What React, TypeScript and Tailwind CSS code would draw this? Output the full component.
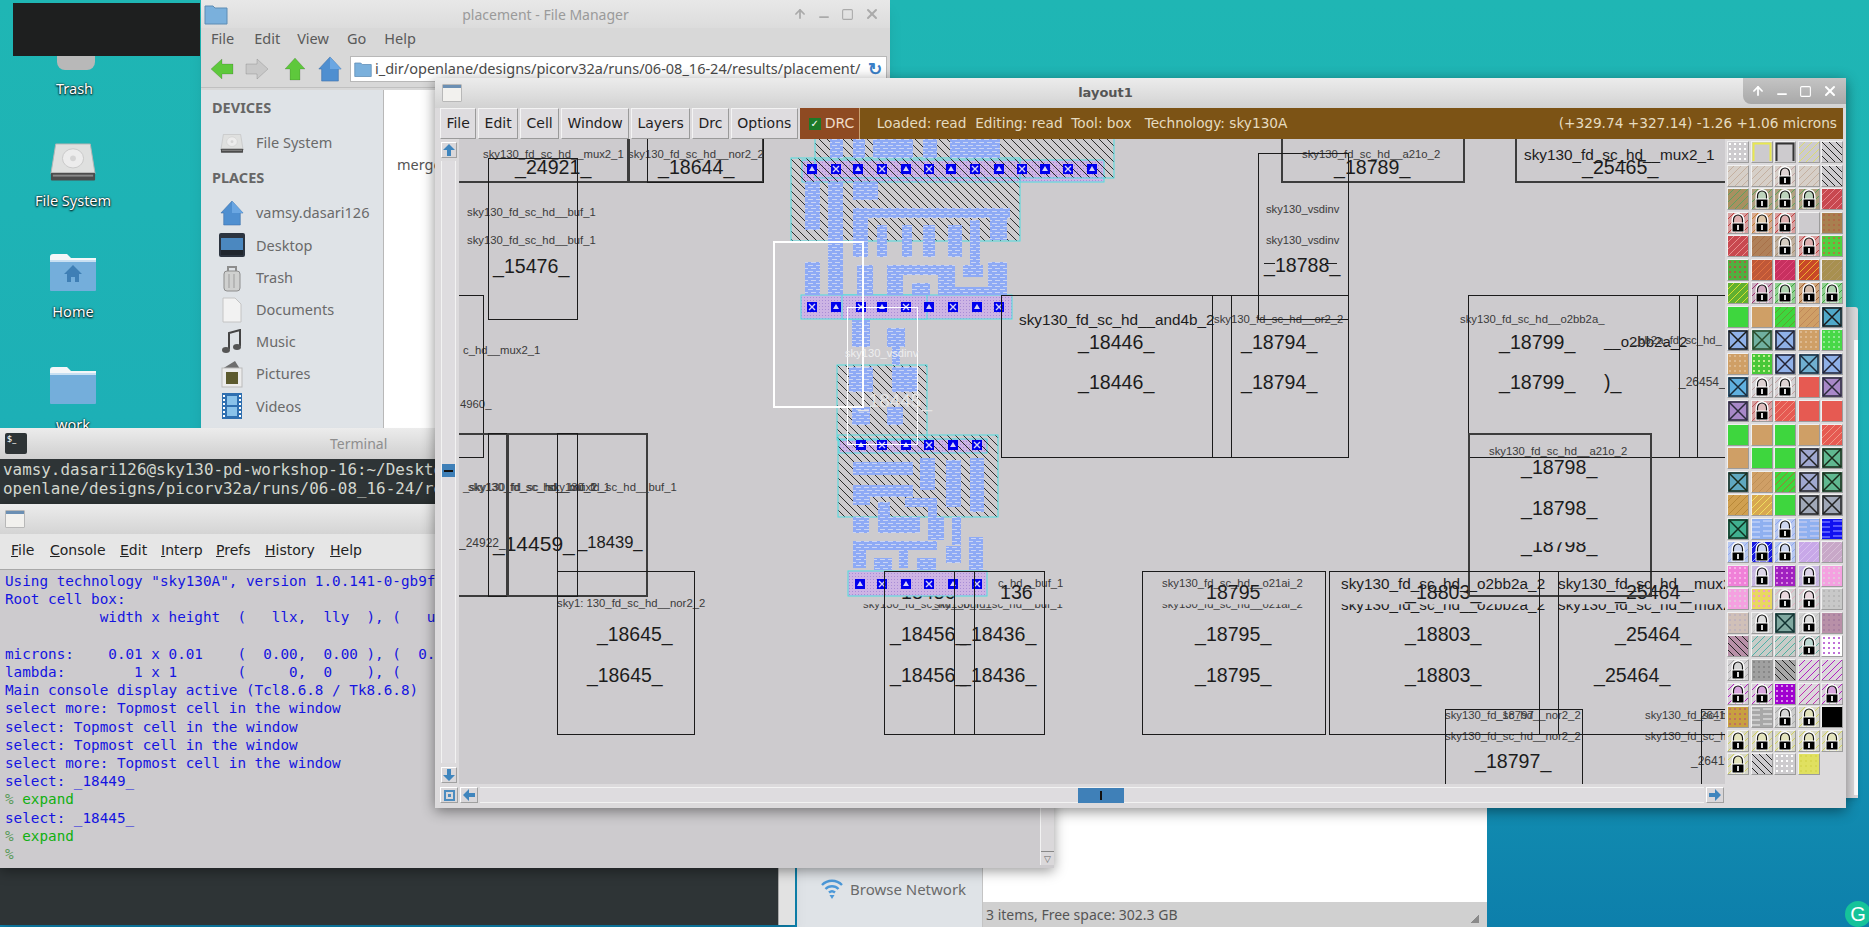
import React from "react";
import { ArrowUp, Minus, Square, X } from "lucide-react";

const SANS = "font-['Noto_Sans',sans-serif]";

// ---- little drawings ----

function FolderIcon({ home }: { home?: boolean }) {
  return (
    <svg width="48" height="40" viewBox="0 0 48 40">
      <path d="M1 5 Q1 2 4 2 H18 L22 6 H47 V38 H1 Z" fill="#f4f6f8" />
      <rect x="1" y="8" width="46" height="31" rx="1" fill="#74aedb" />
      <rect x="1" y="8" width="46" height="2" fill="#c9e0f2" />
      {home && <path d="M24 13 L33 22 H30 V30 H26 V25 H22 V30 H18 V22 H15 Z" fill="#3f7fb5" />}
    </svg>
  );
}

function DriveIcon({ size = 48 }: { size?: number }) {
  return (
    <svg width={size} height={size * 0.8} viewBox="0 0 48 40">
      <path d="M6 1 H42 L47 32 H1 Z" fill="#dfe0df" stroke="#b5b5b5" />
      <ellipse cx="24" cy="16" rx="11" ry="10" fill="#ececec" stroke="#c8c8c8" />
      <circle cx="24" cy="16" r="3" fill="#d4d4d4" />
      <rect x="1" y="31" width="46" height="8" rx="1" fill="#4c4c4c" />
      <rect x="3" y="33" width="42" height="2" fill="#8a8a8a" />
    </svg>
  );
}

function HomeIcon({ w = 26, h = 28 }: { w?: number; h?: number }) {
  return (
    <svg width={w} height={h} viewBox="0 0 26 28">
      <path d="M13 1 L25 14 H22 V27 H4 V14 H1 Z" fill="#4f8fd0" stroke="#3a6fa8" strokeWidth="0.6" />
      <path d="M13 1 L25 14 H13 Z" fill="#6aa6e2" />
    </svg>
  );
}

function ArrowIcon({ dir, color }: { dir: "left" | "right" | "up"; color: string }) {
  const rot = dir === "left" ? 0 : dir === "right" ? 180 : 90;
  return (
    <svg width="24" height="24" viewBox="0 0 24 24">
      <path
        d="M1 12 L12 2 V7 H23 V17 H12 V22 Z"
        fill={color}
        stroke="#00000022"
        transform={`rotate(${rot} 12 12)`}
      />
    </svg>
  );
}

function SideIcon({ name }: { name: string }) {
  if (name === "File System") return <DriveIcon size={24} />;
  if (name === "vamsy.dasari126") return <HomeIcon w={24} h={26} />;
  if (name === "Desktop")
    return (
      <svg width="26" height="24" viewBox="0 0 26 24">
        <rect width="26" height="24" rx="2" fill="#2c3440" />
        <rect x="2" y="5" width="22" height="14" fill="#4b88c0" />
        <rect x="2" y="17" width="22" height="5" fill="#20262e" />
      </svg>
    );
  if (name === "Trash")
    return (
      <svg width="22" height="28" viewBox="0 0 22 28">
        <rect x="3" y="7" width="16" height="20" rx="3" fill="#cfd0cf" stroke="#8d8d8d" />
        <path d="M7 7 V3 H15 V7" fill="none" stroke="#8d8d8d" strokeWidth="2" />
        <path d="M8 10 V24 M13 10 V24" stroke="#9d9d9d" />
      </svg>
    );
  if (name === "Documents")
    return (
      <svg width="20" height="26" viewBox="0 0 20 26">
        <path d="M1 1 H13 L19 7 V25 H1 Z" fill="#f2f2f2" stroke="#c4c4c4" />
      </svg>
    );
  if (name === "Music")
    return (
      <svg width="22" height="26" viewBox="0 0 22 26">
        <path d="M8 20 V4 L19 1 V17" fill="none" stroke="#444" strokeWidth="2" />
        <ellipse cx="5" cy="21" rx="4" ry="3" fill="#555" />
        <ellipse cx="16" cy="18" rx="4" ry="3" fill="#555" />
      </svg>
    );
  if (name === "Pictures")
    return (
      <svg width="26" height="28" viewBox="0 0 26 28">
        <path d="M3 9 L16 1 L21 9 Z" fill="#6e6e6e" />
        <rect x="3" y="8" width="20" height="19" fill="#ececec" stroke="#bbb" />
        <rect x="7" y="12" width="12" height="12" fill="#5c5a2e" />
      </svg>
    );
  return (
    <svg width="24" height="28" viewBox="0 0 24 28">
      <rect x="2" y="1" width="20" height="26" fill="#2f6fb0" />
      <rect x="7" y="4" width="10" height="9" fill="#89c2ea" />
      <rect x="7" y="15" width="10" height="9" fill="#89c2ea" />
      <path d="M4 3 V26 M20 3 V26" stroke="#fff" strokeWidth="2" strokeDasharray="2 2" />
    </svg>
  );
}

function LayoutTitleIcon() {
  return (
    <div className="flex h-[18px] w-[20px] flex-col overflow-hidden rounded-[1px] border border-[#b8b8b8] bg-[#f2f1ee]">
      <div className="h-[3px] bg-[#6b8fb3]" />
    </div>
  );
}

// ---- palette on the right of the layout window ----

type Cell = { bg: string; kind?: "stripe" | "stripe2" | "dots" | "cross" | "box" | "wave"; c?: string; lock?: boolean; none?: boolean };
const F = (bg: string): Cell => ({ bg });
const S = (bg: string, c: string): Cell => ({ bg, kind: "stripe", c });
const B = (bg: string, c: string): Cell => ({ bg, kind: "stripe2", c });
const D = (bg: string, c: string): Cell => ({ bg, kind: "dots", c });
const C = (c: string, bg = "#8fb0e8"): Cell => ({ bg, kind: "cross", c });
const W = (bg: string, c: string): Cell => ({ bg, kind: "wave", c });
const L = (bg = "#d4d2d4", c = "#c0a0a0"): Cell => ({ bg, kind: "stripe", c, lock: true });
const BOX = (c: string): Cell => ({ bg: "#cdcbce", kind: "box", c });

const GREEN = "#3ed63e";
const TAN = "#cf9f66";
const CORAL = "#e65a52";
const BLUE = "#8fb0f0";
const PALE = "#d6cfc8";

const PALETTE: Cell[][] = [
  [D("#cdcbce", "#ffffff"), BOX("#e8e850"), BOX("#333333"), S("#cdcbce", "#dcdc70"), B("#cdcbce", "#222222")],
  [S(PALE, "#c4b0a0"), S(PALE, "#c4b0a0"), L(PALE), S(PALE, "#c4b0a0"), B("#cdcbce", "#222222")],
  [S("#a89060", "#5ea060"), L("#b0a080", "#60a060"), L("#b0a080", "#60a060"), L("#b0a080", "#60a060"), S("#c84850", "#e88890")],
  [L("#d8a0a0", "#c04040"), L("#d8a890", "#c08030"), L("#d8a0a0", "#c04040"), F("#cdcbce"), D("#a88050", "#b06a48")],
  [S("#c84850", "#e89090"), S("#b08058", "#a87048"), L("#c0b0a0", "#a89070"), L("#d8a0a0", "#c04040"), D("#50d040", "#a88040")],
  [D("#50b040", "#a86040"), S("#c05838", "#e07040"), S("#c83060", "#e04878"), S("#c84828", "#f0b030"), S("#a89050", "#b09868")],
  [S("#60b030", "#d8e030"), L("#c8b0c0", "#a03070"), L("#90d090", "#40a040"), L("#d0a880", "#a06030"), L("#90d090", "#40a040")],
  [F(GREEN), F(TAN), S(GREEN, "#60a030"), S(TAN, "#c08858"), C("#1a1a1a", "#50a8c8")],
  [C("#1a1a1a"), C("#2a4a2a", "#70b0a0"), C("#222233"), D(TAN, "#dcb88e"), D("#48d848", "#90e890")],
  [D(TAN, "#dcb88e"), D("#48c838", "#c0ec90"), C("#222233"), C("#1a2a3a", "#70b0d0"), C("#222233")],
  [C("#1a2a3a", "#60b0e0"), L(), L(), F(CORAL), C("#2a2a3a", "#a888c8")],
  [C("#2a2a3a", "#a888c8"), L("#d8a0a0", "#c06060"), S(CORAL, "#f09080"), F(CORAL), F(CORAL)],
  [F(GREEN), F(TAN), F(GREEN), F(TAN), S(CORAL, "#f09888")],
  [F(TAN), F(GREEN), F(GREEN), C("#222222", "#a0a8d0"), C("#1a2a1a", "#60b890")],
  [C("#1a2a1a", "#60a8c0"), S(TAN, "#c09058"), S(GREEN, "#a07838"), C("#222222", "#a0a8d0"), C("#1a2a1a", "#60b890")],
  [S("#d0a050", "#b88838"), S("#d8a850", "#f0e060"), F(GREEN), C("#222222", "#a0a8b8"), C("#222222", "#a0a8b8")],
  [C("#103020", "#40b090"), W(BLUE, "#c0d0f8"), L("#b8c8f0", "#90a8f0"), W(BLUE, "#c0c8f0"), W("#1010f0", "#7070ff")],
  [L("#b8c8f0", "#90a8f0"), L("#1818e0", "#90a8f0"), L("#b8c8f0", "#90a8f0"), S("#c8a8e8", "#d8c0f0"), S("#c8a8c8", "#d8c0d8")],
  [D("#f080d8", "#f8b0e8"), L("#c8b8e0", "#c0a8e0"), D("#a020c0", "#d880e0"), L("#c8b8e0", "#c0a8e0"), D("#f4a0e0", "#e4c4dc")],
  [D("#f4a0e0", "#e4c4dc"), D("#e8d860", "#f0a0c0"), L("#d0d0d0", "#e0b0c0"), L("#d0d0d0", "#e0b0c0"), D("#c8c8c8", "#b8b8b8")],
  [D("#d0c0b8", "#c0b4bc"), L("#d0d0d0", "#c0c0c0"), C("#103030", "#80a8a0"), L("#d0d0d0", "#c0c0c0"), D("#b890a8", "#a880a0")],
  [B("#b890a8", "#222222"), S("#c8ccc8", "#50b0a8"), S("#c8ccc8", "#50b0a0"), L("#d0d0d0", "#60b0a0"), D("#ffffff", "#c070d8")],
  [L("#d4d2d4", "#a8a8a8"), D("#a0a0a0", "#888888"), B("#a8a8a8", "#222222"), S("#dcd8dc", "#b020c0"), S("#dcd8dc", "#b020c0")],
  [L("#d8d0d8", "#b020c0"), L("#d8d0d8", "#b020c0"), D("#a000d0", "#d890e8"), S("#dcd8dc", "#c030b0"), L("#d8d0d8", "#b020c0")],
  [D("#c8a040", "#c07060"), W("#a8a8a8", "#d8d8d8"), L("#cccccc", "#a8a8a8"), L("#d8d8c8", "#d0d060"), F("#000000")],
  [L("#d8d8c8", "#d0d060"), L("#d8d8c8", "#d0d060"), L("#d8d8c8", "#d0d060"), L("#d8d8c8", "#d0d060"), L("#d8d8c8", "#d0d060")],
  [L("#d8d8c8", "#d0d060"), B("#cdcbce", "#222222"), D("#cdcbce", "#ffffff"), D("#e0e060", "#d8d850"), { bg: "", none: true }],
];

function PaletteSwatch({ cell }: { cell: Cell }) {
  if (cell.none) return <div />;
  const lines = [-14, -7, 0, 7, 14];
  return (
    <div className="border border-t-[#f0f0f0] border-l-[#f0f0f0] border-r-[#9c9c9c] border-b-[#9c9c9c]">
      <svg width="20" height="20" viewBox="0 0 20 20" className="block">
        <rect width="20" height="20" fill={cell.bg} />
        {cell.kind === "stripe" &&
          lines.map((o) => <path key={o} d={`M${o} 20 L${o + 20} 0`} stroke={cell.c} strokeWidth="1" />)}
        {cell.kind === "stripe2" &&
          lines.map((o) => <path key={o} d={`M${o} 0 L${o + 20} 20`} stroke={cell.c} strokeWidth="1" />)}
        {cell.kind === "dots" &&
          [2, 7, 12, 17].map((y) =>
            [2, 7, 12, 17].map((x) => <rect key={`${x}-${y}`} x={x - 1} y={y - 1} width="2" height="2" fill={cell.c} />),
          )}
        {cell.kind === "wave" &&
          [3, 8, 13, 18].map((y) => <path key={y} d={`M0 ${y} h8 M11 ${y - 1} h9`} stroke={cell.c} strokeWidth="1.5" />)}
        {cell.kind === "box" && <path d="M1.5 19 V1.5 H18.5 V19" fill="none" stroke={cell.c} strokeWidth="2" />}
        {cell.kind === "cross" && (
          <g fill="none" stroke={cell.c} strokeWidth="1.5">
            <rect x="1" y="1" width="18" height="18" />
            <path d="M1 1 L19 19 M19 1 L1 19" />
          </g>
        )}
        {cell.lock && (
          <g>
            <path d="M5 11 V7 a5 5.5 0 0 1 10 0 V11" fill="#eeeeee" stroke="#ffffff" strokeWidth="3" />
            <path d="M5.5 11 V7 a4.5 5 0 0 1 9 0 V11" fill={cell.c} fillOpacity="0.35" stroke="#111111" strokeWidth="1.2" />
            <rect x="4" y="10" width="12" height="9" fill="#000000" stroke="#ffffff" strokeWidth="1" />
            <rect x="9" y="12" width="2" height="5" fill="#d8d8d8" />
          </g>
        )}
      </svg>
    </div>
  );
}

// ---- the cell layout canvas ----

const CX = 459;
const CY = 139;

// x1, y1, x2, y2, line width
const BOXES: [number, number, number, number, number?][] = [
  [400, 120, 628, 182, 2],
  [628, 120, 763, 182, 2],
  [647, 120, 763, 182],
  [488, 158, 577, 319],
  [400, 295, 483, 457],
  [400, 433, 507, 596, 2],
  [488, 433, 557, 596],
  [507, 433, 647, 596, 2],
  [557, 433, 577, 596],
  [557, 571, 694, 734],
  [884, 571, 974, 734],
  [954, 571, 1044, 734],
  [1281, 120, 1464, 182, 2],
  [1515, 120, 1800, 182, 2],
  [1258, 153, 1348, 319],
  [1001, 295, 1231, 457],
  [1212, 295, 1348, 457],
  [1468, 295, 1697, 457],
  [1679, 295, 1800, 457],
  [1468, 433, 1651, 596, 2],
  [1142, 571, 1325, 734],
  [1329, 571, 1558, 734],
  [1539, 571, 1800, 734],
  [1445, 709, 1582, 800],
  [1701, 709, 1800, 800],
];

// text, x, y (middle of the digits), size, cut off the top
const LABELS: [string, number, number, number, number?][] = [
  ["sky130_fd_sc_hd__mux2_1", 483, 155, 11.3],
  ["sky130_fd_sc_hd__nor2_2", 628, 155, 11.3],
  ["_24921_", 515, 168, 19.6],
  ["_18644_", 658, 168, 19.6],
  ["sky130_fd_sc_hd__buf_1", 467, 213, 11.3],
  ["sky130_fd_sc_hd__buf_1", 467, 241, 11.3],
  ["_15476_", 493, 267, 19.6],
  ["c_hd__mux2_1", 463, 351, 11.3],
  ["4960_", 460, 405, 11.3],
  ["_sky130_fd_sc_hd__mux2_1", 463, 488, 11.3],
  ["sky130_fd_sc_hd__buf_1", 468, 488, 11.3],
  ["sky130_fd_sc_hd__buf_1", 548, 488, 11.3],
  ["_24922_", 459, 543, 12],
  ["_14459_", 493, 543, 21],
  ["_18439_", 578, 543, 16.6],
  ["sky1: 130_fd_sc_hd__nor2_2", 557, 604, 11.3],
  ["_18645_", 597, 635, 19.4],
  ["_18645_", 587, 676, 19.4],
  ["18456", 901, 593, 19.6],
  ["c_hd__buf_1", 998, 584, 11.3],
  ["136", 1000, 593, 19.6],
  ["sky130_fd_sc_hd__buf_1", 863, 605, 11.3, 5],
  ["sky130_fd_sc_hd__buf_1", 934, 605, 11.3, 5],
  ["_18456_", 890, 635, 19.6],
  ["_18456_", 890, 676, 19.6],
  ["_18436_", 960, 635, 19.6],
  ["_18436_", 960, 676, 19.6],
  ["sky130_fd_sc_hd__a21o_2", 1302, 155, 11.3],
  ["_18789_", 1334, 168, 19.6],
  ["sky130_fd_sc_hd__mux2_1", 1524, 155, 15.3],
  ["_25465_", 1582, 168, 19.6],
  ["sky130_vsdinv", 1266, 210, 11.2],
  ["sky130_vsdinv", 1266, 241, 11.2],
  ["_18788_", 1264, 266, 19.6],
  ["sky130_fd_sc_hd__and4b_2", 1019, 320, 15.3],
  ["sky130_fd_sc_hd__or2_2", 1214, 320, 11.3],
  ["_18446_", 1078, 343, 19.6],
  ["_18446_", 1078, 383, 19.6],
  ["_18794_", 1241, 343, 19.6],
  ["_18794_", 1241, 383, 19.6],
  ["sky130_fd_sc_hd__o2bb2a_", 1460, 320, 11.3],
  ["_18799_", 1499, 343, 19.6],
  ["_18799_", 1499, 383, 19.6],
  ["__o2bb2a_2", 1604, 341, 15],
  ["_bb2a_fd_sc_hd_", 1632, 341, 11.3],
  [")_", 1604, 383, 19.6],
  ["_26454_", 1679, 382, 12],
  ["sky130_fd_sc_hd__a21o_2", 1489, 452, 11.3],
  ["_18798_", 1521, 468, 19.6],
  ["_18798_", 1521, 509, 19.6],
  ["_18798_", 1521, 546, 19.6, 6],
  ["sky130_fd_sc_hd__o21ai_2", 1162, 584, 11.3],
  ["sky130_fd_sc_hd__o21ai_2", 1162, 605, 11.3, 5],
  ["18795", 1206, 593, 19.6],
  ["_18795_", 1195, 635, 19.6],
  ["_18795_", 1195, 676, 19.6],
  ["sky130_fd_sc_hd__o2bb2a_2", 1341, 584, 15.3],
  ["sky130_fd_sc_hd__o2bb2a_2", 1341, 605, 15.3, 7],
  ["_18803_", 1405, 593, 19.6],
  ["_18803_", 1405, 635, 19.6],
  ["_18803_", 1405, 676, 19.6],
  ["sky130_fd_sc_hd__mux2_1", 1558, 584, 15.3],
  ["sky130_fd_sc_hd__mux2_1", 1558, 605, 15.3, 7],
  ["_25464_", 1615, 593, 19.6],
  ["_25464_", 1615, 635, 19.6],
  ["_25464_", 1594, 676, 19.6],
  ["sky130_fd_sc_hd__nor2_2", 1445, 716, 11.3],
  ["sky130_fd_sc_hd__nor2_2", 1445, 737, 11.3],
  ["_18797", 1496, 716, 11.3],
  ["_18797_", 1475, 762, 19.6],
  ["sky130_fd_sc_hd__nor2_2", 1645, 716, 11.3],
  ["sky130_fd_sc_hd__nor2_2", 1645, 737, 11.3],
  ["_26411_", 1694, 716, 11.3],
  ["_26419_", 1691, 761, 12],
];

const HATCH = [
  [815, 130, 1114, 178],
  [791, 158, 1020, 241],
  [837, 365, 927, 440],
  [838, 435, 998, 517],
];

const PINK = [
  [802, 160, 1104, 182],
  [801, 295, 1012, 319],
  [842, 295, 927, 319],
  [839, 439, 987, 453],
  [848, 571, 987, 596],
];

const BLUE_BLOCKS = [
  [830, 139, 843, 158], [853, 139, 865, 158], [873, 139, 913, 158], [923, 139, 937, 158], [950, 139, 1000, 158],
  [805, 182, 820, 230], [828, 182, 843, 295], [853, 182, 878, 200],
  [853, 208, 1010, 218], [853, 208, 868, 257], [877, 225, 887, 257], [902, 225, 912, 257],
  [923, 225, 935, 257], [948, 225, 962, 257], [970, 220, 980, 265], [990, 215, 1007, 240],
  [805, 262, 820, 295], [857, 265, 873, 295], [887, 265, 903, 295], [887, 265, 955, 275],
  [938, 265, 955, 295], [912, 283, 930, 295], [938, 287, 1007, 295], [988, 262, 1007, 295],
  [963, 265, 983, 277],
  [852, 320, 870, 347], [887, 328, 905, 347], [892, 347, 900, 365],
  [849, 367, 873, 392], [892, 367, 917, 392], [852, 407, 870, 425], [887, 407, 903, 425],
  [853, 462, 913, 475], [920, 458, 935, 490], [946, 460, 961, 507], [970, 458, 984, 512],
  [853, 485, 913, 497], [853, 485, 870, 505], [905, 498, 937, 507], [928, 498, 937, 517], [878, 502, 890, 517],
  [853, 517, 869, 533], [878, 517, 920, 533], [928, 517, 944, 540], [952, 517, 961, 545],
  [946, 546, 961, 563], [969, 537, 983, 570], [853, 541, 937, 550], [853, 541, 866, 568],
  [874, 558, 892, 570], [899, 548, 908, 568], [917, 558, 936, 570],
];

const CONTACTS: [number, number][] = [
  ...[812, 836, 858, 882, 906, 929, 951, 975, 999, 1022, 1045, 1068, 1092].map((x): [number, number] => [x, 169]),
  ...[812, 836, 861, 882, 906, 929, 953, 977, 999].map((x): [number, number] => [x, 307]),
  ...[861, 882, 906, 929, 953, 977].map((x): [number, number] => [x, 445]),
  ...[860, 882, 906, 929, 953, 977].map((x): [number, number] => [x, 584]),
];

function Paint() {
  return (
    <svg
      width="1266"
      height="645"
      viewBox={`${CX} ${CY} 1266 645`}
      className="absolute left-0 top-0"
    >
      <defs>
        <pattern id="hatch" width="8" height="8" patternUnits="userSpaceOnUse">
          <path d="M-1 -1 L9 9" stroke="#2b2b2b" strokeWidth="1" />
        </pattern>
        <pattern id="wave" width="8" height="6" patternUnits="userSpaceOnUse">
          <rect width="8" height="6" fill="#8eaaf5" />
          <path d="M0 1.5 h5 M3 4.5 h5" stroke="#cad5f4" strokeWidth="1" />
        </pattern>
        <pattern id="pink" width="3" height="3" patternUnits="userSpaceOnUse">
          <rect width="3" height="3" fill="#cdb4e4" />
          <rect width="1" height="1" fill="#a88cd6" />
        </pattern>
      </defs>
      {PINK.map(([a, b, c, d]) => (
        <rect key={`${a}-${b}-${c}`} x={a} y={b} width={c - a} height={d - b} fill="url(#pink)" stroke="#4fdde0" />
      ))}
      {HATCH.map(([a, b, c, d]) => (
        <rect key={`${a}-${b}`} x={a} y={b} width={c - a} height={d - b} fill="url(#hatch)" stroke="#4fdde0" />
      ))}
      {BLUE_BLOCKS.map(([a, b, c, d]) => (
        <rect key={`${a}-${b}-${c}`} x={a} y={b} width={c - a} height={d - b} fill="url(#wave)" />
      ))}
      {CONTACTS.map(([x, y], i) => (
        <g key={`${x}-${y}`}>
          <rect x={x - 5} y={y - 5} width="10" height="10" fill="#0000ee" />
          {i % 2 === 0 ? (
            <path d={`M${x - 3} ${y + 2} L${x} ${y - 3} L${x + 3} ${y + 2} Z`} fill="#d8d4f4" />
          ) : (
            <path d={`M${x - 3} ${y - 3} L${x + 3} ${y + 3} M${x + 3} ${y - 3} L${x - 3} ${y + 3}`} stroke="#d8d4f4" strokeWidth="1.4" />
          )}
        </g>
      ))}
    </svg>
  );
}

function LayoutCanvas() {
  return (
    <div className="relative h-[645px] w-[1266px] overflow-hidden bg-[#cdcbce] font-['Liberation_Sans',sans-serif]">
      {LABELS.map(([text, x, y, size, cut], i) => (
        <span
          key={i}
          className="absolute -translate-y-1/2 whitespace-nowrap leading-none"
          style={{
            left: x - CX,
            top: y - CY,
            fontSize: size,
            color: size < 13 ? "#3a3a3a" : "#1c1c1c",
            clipPath: cut ? `inset(${cut}px -4px -4px -4px)` : undefined,
          }}
        >
          {text}
        </span>
      ))}
      <Paint />
      {BOXES.map(([a, b, c, d, lw], i) => (
        <div
          key={i}
          className="absolute border-[#1b1b1b]"
          style={{ left: a - CX, top: b - CY, width: c - a + 1, height: d - b + 1, borderWidth: lw ?? 1, borderColor: lw ? "#3c3c3c" : undefined }}
        />
      ))}
      {/* stray underscores of a redraw */}
      <div className="absolute left-[805px] top-[124px] h-[1px] w-[11px] bg-[#222]" />
      <div className="absolute left-[866px] top-[124px] h-[1px] w-[12px] bg-[#222]" />
      {/* selection */}
      <div className="absolute left-[314px] top-[102px] h-[167px] w-[91px] border-2 border-white" />
      <div className="absolute left-[388px] top-[168px] h-[138px] w-[71px] border border-white" />
      <span className="absolute left-[386px] top-[209px] whitespace-nowrap text-[11.2px] leading-none text-[#eeeeee]">sky130_vsdinv</span>
      <span className="absolute left-[399px] top-[252px] whitespace-nowrap text-[19px] leading-none text-[#e4e4e4]">_18445_</span>
    </div>
  );
}

// ---- windows ----

function WinButtons({ light }: { light?: boolean }) {
  const c = light ? "text-white" : "text-[#aaaaaa]";
  return (
    <div className={`flex items-center gap-[10px] ${c}`}>
      <ArrowUp size={14} strokeWidth={3} />
      <Minus size={14} strokeWidth={3} className="translate-y-[3px]" />
      <Square size={13} strokeWidth={2} />
      <X size={16} strokeWidth={3} />
    </div>
  );
}

function ScrollButton({ children, wide }: { children?: React.ReactNode; wide?: boolean }) {
  return (
    <div
      className={`flex items-center justify-center border border-t-white border-l-white border-r-[#a0a0a0] border-b-[#a0a0a0] bg-[#d9d7da] ${wide ? "h-[16px] w-[18px]" : "h-[16px] w-[16px]"}`}
    >
      {children}
    </div>
  );
}

const ARROW_BLUE = "#3f85bd";

function LayoutWindow() {
  const menus = ["File", "Edit", "Cell", "Window", "Layers", "Drc", "Options"];
  return (
    <div className="absolute left-[435px] top-[78px] z-50 flex h-[730px] w-[1411px] flex-col rounded-t-[3px] bg-[#dcdadc] shadow-[0_3px_14px_rgba(0,0,0,0.45)] font-['DejaVu_Sans',sans-serif]">
      <div className="relative flex h-[30px] items-center bg-gradient-to-b from-[#ececec] to-[#d2d2d2] pl-[7px]">
        <LayoutTitleIcon />
        <span className="absolute left-0 right-[70px] text-center text-[13px] font-bold text-[#555555]">layout1</span>
        <div className="absolute right-0 top-0 flex h-[26px] w-[103px] items-center justify-center rounded-bl-[8px] bg-gradient-to-b from-[#c4c4c4] to-[#a8a8a8]">
          <WinButtons light />
        </div>
      </div>
      <div className="flex h-[31px] items-stretch gap-[2px] pl-[5px] pr-[3px]">
        {menus.map((m) => (
          <div
            key={m}
            className="flex items-center border border-t-[#f4f4f4] border-l-[#f4f4f4] border-r-[#9a9a9a] border-b-[#9a9a9a] bg-[#dedcdf] px-[5.4px] text-[14px] text-[#1e1e1e]"
          >
            {m}
          </div>
        ))}
        <div className="flex w-[60px] items-center gap-[4px] border-r border-[#c8a070] bg-[#8e4a22] pl-[9px] text-[14px] text-[#f0dcc8]">
          <div className="flex h-[12px] w-[12px] items-center justify-center bg-[#1c7a28] text-[10px] leading-none font-bold text-white">✓</div>
          DRC
        </div>
        <div className="-ml-[2px] flex flex-1 items-center justify-between bg-[#7c5315] pl-[17px] pr-[6px] text-[13.7px] whitespace-pre text-[#e6dcc0]">
          <span>Loaded: read  Editing: read  Tool: box   Technology: sky130A</span>
          <span>(+329.74 +327.14) -1.26 +1.06 microns</span>
        </div>
      </div>
      <div className="flex flex-1">
        <div className="flex w-[1290px] flex-col">
          <div className="flex">
            <div className="flex w-[24px] flex-col items-start pl-[6px] pt-[3px]">
              <ScrollButton>
                <svg width="12" height="12" viewBox="0 0 12 12"><path d="M6 0 L12 6 H8 V12 H4 V6 H0 Z" fill={ARROW_BLUE} /></svg>
              </ScrollButton>
              <div className="relative mt-[3px] h-[602px] w-[15px] border-x border-[#f2f2f2] bg-[#dedcdf]">
                <div className="absolute left-0 right-0 top-[303px] flex h-[13px] items-center justify-center bg-[#3f80b8]">
                  <div className="h-[2px] w-[9px] bg-[#111]" />
                </div>
              </div>
              <div className="mt-[4px]">
                <ScrollButton>
                  <svg width="12" height="12" viewBox="0 0 12 12"><path d="M6 12 L12 6 H8 V0 H4 V6 H0 Z" fill={ARROW_BLUE} /></svg>
                </ScrollButton>
              </div>
            </div>
            <LayoutCanvas />
          </div>
          <div className="flex h-[24px] items-start gap-[2px] pl-[5px] pt-[3px]">
            <ScrollButton wide>
              <div className="flex h-[11px] w-[11px] items-center justify-center border-2 border-[#4b8cc0]"><div className="h-[3px] w-[3px] bg-[#4b8cc0]" /></div>
            </ScrollButton>
            <ScrollButton wide>
              <svg width="12" height="12" viewBox="0 0 12 12"><path d="M0 6 L6 0 V4 H12 V8 H6 V12 Z" fill={ARROW_BLUE} /></svg>
            </ScrollButton>
            <div className="relative h-[16px] w-[1224px] border-y border-[#f2f2f2] bg-[#dedcdf]">
              <div className="absolute left-[598px] top-0 flex h-[15px] w-[46px] items-center justify-center bg-[#3f80b8]">
                <div className="h-[9px] w-[2px] bg-[#111]" />
              </div>
            </div>
            <ScrollButton wide>
              <svg width="12" height="12" viewBox="0 0 12 12"><path d="M12 6 L6 0 V4 H0 V8 H6 V12 Z" fill={ARROW_BLUE} /></svg>
            </ScrollButton>
          </div>
        </div>
        <div className="flex-1 pl-[2px] pt-[2px]">
          <div className="grid grid-cols-[repeat(5,22px)] gap-x-[1.5px] gap-y-[1.55px]">
            {PALETTE.flat().map((cell, i) => (
              <PaletteSwatch key={i} cell={cell} />
            ))}
          </div>
        </div>
      </div>
    </div>
  );
}

const SIDEBAR: { head: string; items: string[] }[] = [
  { head: "DEVICES", items: ["File System"] },
  { head: "PLACES", items: ["vamsy.dasari126", "Desktop", "Trash", "Documents", "Music", "Pictures", "Videos"] },
];

function FileManagerWindow() {
  const menus: [string, string][] = [["File", "ml-[10px]"], ["Edit", "ml-[20px]"], ["View", "ml-[17px]"], ["Go", "ml-[18px]"], ["Help", "ml-[18px]"]];
  return (
    <div className={`absolute left-[201px] top-0 z-20 flex h-[560px] w-[689px] flex-col bg-[#d8d8d8] shadow-lg ${SANS}`}>
      <div className="relative flex h-[28px] items-center bg-gradient-to-b from-[#e8e8e8] to-[#dcdcdc] pl-[3px]">
        <svg width="24" height="22" viewBox="0 0 24 22"><path d="M1 3 H9 L11 5 H23 V21 H1 Z" fill="#7ab0dc" stroke="#5d8cb4" /></svg>
        <span className="absolute left-0 right-0 text-center text-[14px] text-[#9a9a9a]">placement - File Manager</span>
        <div className="absolute right-[10px] top-[6px]"><WinButtons /></div>
      </div>
      <div className="flex h-[22px] items-center text-[14.5px] text-[#5a5a5a]">
        {menus.map(([m, cls]) => (
          <span key={m} className={cls}>{m}</span>
        ))}
      </div>
      <div className="mb-[2px] flex h-[38px] items-center border-b border-[#c0c0c0] pl-[9px] pr-[3px]">
        <ArrowIcon dir="left" color="#5ec83c" />
        <div className="ml-[11px]"><ArrowIcon dir="right" color="#c8c8c8" /></div>
        <div className="ml-[14px]"><ArrowIcon dir="up" color="#5ec83c" /></div>
        <div className="ml-[10px]"><HomeIcon w={26} h={26} /></div>
        <div className="ml-[7px] flex h-[26px] flex-1 items-center border border-[#b8b8b8] bg-white pl-[3px] pr-[4px]">
          <svg width="18" height="18" viewBox="0 0 24 22" className="shrink-0"><path d="M1 3 H9 L11 5 H23 V21 H1 Z" fill="#7ab0dc" stroke="#5d8cb4" /></svg>
          <span className="ml-[3px] flex-1 overflow-hidden text-[14.5px] whitespace-nowrap text-[#4a4a4a]">i_dir/openlane/designs/picorv32a/runs/06-08_16-24/results/placement/</span>
          <span className="ml-[5px] text-[17px] leading-none font-bold text-[#3a80c8]">↻</span>
        </div>
      </div>
      <div className="flex flex-1">
        <div className="w-[183px] border-r border-[#b8b8b8] bg-[#dfe3e7] pl-[11px] pt-[7px]">
          {SIDEBAR.map((group) => (
            <div key={group.head}>
              <div className="flex h-[22px] items-center text-[14.5px] font-bold text-[#666666]">{group.head}</div>
              <div className="mb-[8px] mt-[8px] flex flex-col">
                {group.items.map((item) => (
                  <div key={item} className="flex h-[32.2px] items-center">
                    <div className="flex w-[44px] justify-center pr-[4px]"><SideIcon name={item} /></div>
                    <span className="text-[14.5px] whitespace-nowrap text-[#6a6a6a]">{item}</span>
                  </div>
                ))}
              </div>
            </div>
          ))}
        </div>
        <div className="flex-1 bg-white pl-[13px] pt-[67px] text-[14.5px] leading-none text-[#555555]">merged</div>
      </div>
    </div>
  );
}

function LowerFileManager() {
  return (
    <div className={`absolute left-[797px] top-[700px] z-10 flex h-[227px] w-[690px] ${SANS}`}>
      <div className="flex w-[186px] flex-col justify-end border-r border-[#c4c4c4] bg-[#dfe3e7] pb-[27px] pl-[23px]">
        <div className="flex items-center gap-[6px] text-[15px] text-[#6a6a6a]">
          <svg width="24" height="22" viewBox="0 0 24 22" fill="none" stroke="#4b98d8" strokeWidth="2.4">
            <path d="M2 7 a14 14 0 0 1 20 0" />
            <path d="M5.5 11 a9 9 0 0 1 13 0" />
            <path d="M9 14.5 a4.5 4.5 0 0 1 6 0" />
            <path d="M12 21 L9.5 17 H14.5 Z" fill="#4b98d8" stroke="none" />
          </svg>
          Browse Network
        </div>
      </div>
      <div className="flex flex-1 flex-col bg-white">
        <div className="flex-1" />
        <div className="relative flex h-[25px] items-center bg-[#d0d0d0] pl-[3px] text-[14px] text-[#555555]">
          3 items, Free space: 302.3 GB
          <span className="absolute bottom-[4px] right-[8px] h-[8px] w-[8px] bg-[linear-gradient(135deg,transparent_50%,#8a8a8a_50%)]" />
        </div>
      </div>
    </div>
  );
}

function TerminalWindow() {
  return (
    <div className={`absolute left-0 top-[428px] z-30 flex h-[497px] w-[795px] flex-col shadow-lg ${SANS}`}>
      <div className="relative flex h-[31px] items-center bg-gradient-to-b from-[#ececec] to-[#cfcfcf] pl-[5px]">
        <div className="flex h-[21px] w-[22px] items-start rounded-[2px] bg-[#2e3436] pl-[2px] text-[9px] leading-[12px] text-white">$_</div>
        <span className="absolute left-[330px] text-[14px] text-[#8e8e8e]">Terminal</span>
      </div>
      <div className="relative flex flex-1 bg-[#2e3436]">
        <div className="flex-1 pl-[3px] pt-[1px] font-['DejaVu_Sans_Mono',monospace] text-[15.9px] leading-[19px] whitespace-pre text-[#d3d7cf]">
          <div>vamsy.dasari126@sky130-pd-workshop-16:~/Desktop/work/tools/</div>
          <div>openlane/designs/picorv32a/runs/06-08_16-24/results/placement</div>
        </div>
        <div className="w-[17px] border-l border-[#aaaaaa] bg-[#e2e2e2]" />
      </div>
    </div>
  );
}

const CONSOLE_LINES: { t: string; c?: string }[] = [
  { t: 'Using technology "sky130A", version 1.0.141-0-gb9f' },
  { t: "Root cell box:" },
  { t: "           width x height  (   llx,  lly  ), (   u" },
  { t: " " },
  { t: "microns:    0.01 x 0.01    (  0.00,  0.00 ), (  0." },
  { t: "lambda:        1 x 1       (     0,  0    ), (" },
  { t: "Main console display active (Tcl8.6.8 / Tk8.6.8)" },
  { t: "select more: Topmost cell in the window" },
  { t: "select: Topmost cell in the window" },
  { t: "select: Topmost cell in the window" },
  { t: "select more: Topmost cell in the window" },
  { t: "select: _18449_" },
  { t: "expand", c: "prompt" },
  { t: "select: _18445_" },
  { t: "expand", c: "prompt" },
  { t: "", c: "prompt" },
];

function ConsoleWindow() {
  const menus = [
    ["File", 11], ["Console", 50], ["Edit", 120], ["Interp", 161], ["Prefs", 216], ["History", 265], ["Help", 330],
  ] as const;
  return (
    <div className="absolute left-0 top-[504px] z-40 flex h-[364px] w-[1054px] flex-col bg-[#e2e0e2] shadow-[0_3px_12px_rgba(0,0,0,0.4)]">
      <div className="flex h-[30px] items-center bg-gradient-to-b from-[#ececec] to-[#d4d4d4] pl-[5px]">
        <LayoutTitleIcon />
      </div>
      <div className="relative h-[35px] bg-[#e6e6e6] font-['DejaVu_Sans',sans-serif] text-[14px] text-[#222222]">
        {menus.map(([m, x]) => (
          <span key={m} className="absolute top-[6px]" style={{ left: x }}>
            <span className="underline">{m[0]}</span>
            {m.slice(1)}
          </span>
        ))}
      </div>
      <div className="flex flex-1 border-t border-[#a8a8a8] bg-[#cdcbce] pb-[3px] pl-[5px]">
        <div className="flex-1 pt-[2px] font-['DejaVu_Sans_Mono',monospace] text-[14.3px] leading-[18.2px] whitespace-pre text-[#1414e0]">
          {CONSOLE_LINES.map((line, i) =>
            line.c ? (
              <div key={i}>
                <span className="text-[#5a9a5a]">% </span>
                <span className="text-[#10b010]">{line.t}</span>
              </div>
            ) : (
              <div key={i}>{line.t}</div>
            ),
          )}
        </div>
        <div className="flex w-[14px] flex-col justify-end border-l border-[#f2f2f2] bg-[#dad8da]">
          <div className="flex h-[14px] items-center justify-center border-t border-[#888888] text-[9px] leading-none text-[#666666]">▽</div>
        </div>
      </div>
    </div>
  );
}

function DesktopIcon({ label, top, children }: { label: string; top: number; children: React.ReactNode }) {
  return (
    <div className="absolute left-0 flex w-[146px] flex-col items-center" style={{ top }}>
      <div className="flex h-[40px] items-end">{children}</div>
      <span className={`mt-[9px] text-[14.5px] text-white [text-shadow:0_1px_2px_#000,0_0_2px_#000] ${SANS}`}>{label}</span>
    </div>
  );
}

export default function App() {
  return (
    <div className="relative h-[927px] w-[1869px] overflow-hidden bg-[linear-gradient(180deg,#1fb6b4_0%,#1db0b6_45%,#1596b4_75%,#0d7fab_100%)]">
      <div className="absolute left-[57px] top-[40px] h-[30px] w-[38px] rounded-b-[8px] bg-[#b8b8b8]" />
      <span className={`absolute left-[56px] top-[78px] text-[14.5px] text-white [text-shadow:0_1px_2px_#000,0_0_2px_#000] ${SANS}`}>Trash</span>
      <DesktopIcon label="File System" top={141}><DriveIcon size={48} /></DesktopIcon>
      <DesktopIcon label="Home" top={252}><FolderIcon home /></DesktopIcon>
      <DesktopIcon label="work" top={365}><FolderIcon /></DesktopIcon>
      <div className="absolute left-[13px] top-[3px] z-[60] h-[53px] w-[187px] bg-[#1e1f1f]" />

      <div className="absolute left-[1800px] top-[307px] z-[5] flex h-[491px] w-[58px] justify-end rounded-tr-[3px] bg-[#dedcde] shadow-md">
        <div className="mt-[33px] mb-[3px] w-[4px] bg-white" />
      </div>
      <LowerFileManager />
      <FileManagerWindow />
      <TerminalWindow />
      <ConsoleWindow />
      <LayoutWindow />

      <div className="absolute left-[1845px] top-[901px] z-[60] flex h-[26px] w-[26px] items-center justify-center rounded-full bg-[#15c39a] font-['Liberation_Sans',sans-serif] text-[20px] leading-none text-white">G</div>
    </div>
  );
}
